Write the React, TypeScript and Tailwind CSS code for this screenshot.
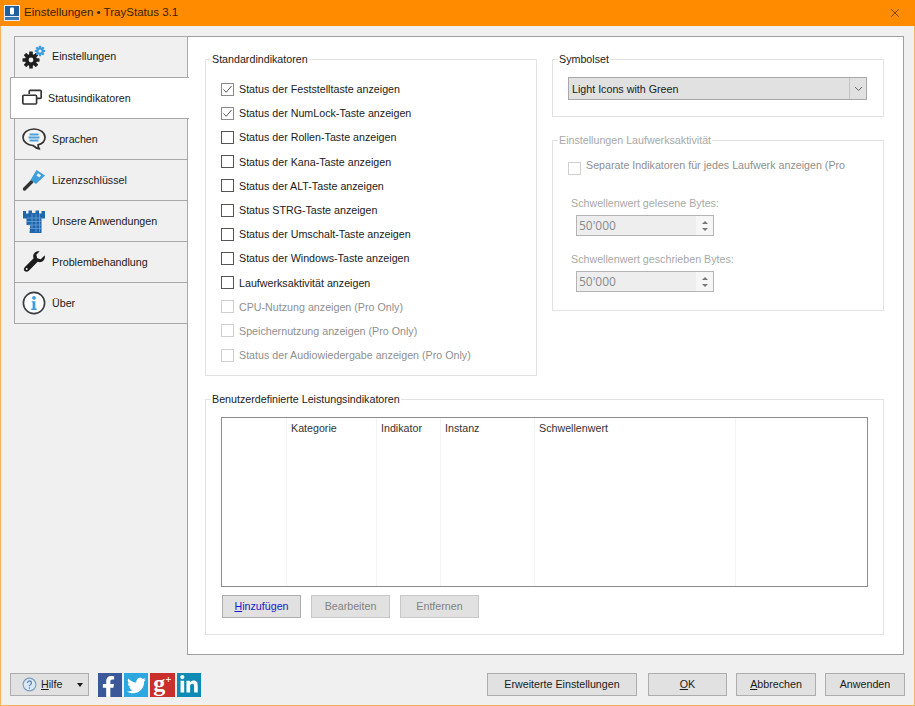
import type { ReactNode } from "react"
import { FaFacebookF, FaLinkedinIn, FaTwitter } from "react-icons/fa"
import { X } from "lucide-react"

const GearsIcon = () => (
  <svg width="24" height="24" viewBox="0 0 24 24">
    <g fill="#1f1f1f">
      <circle cx="9" cy="15" r="6" />
      {[0, 45, 90, 135].map((a) => (
        <rect key={a} x="7.2" y="6.5" width="3.6" height="17" rx="0.6" transform={`rotate(${a} 9 15)`} />
      ))}
    </g>
    <circle cx="9" cy="15" r="2.4" fill="#f0f0f0" />
    <g fill="#3f9ddb">
      <circle cx="18" cy="6" r="3.8" />
      {[0, 45, 90, 135].map((a) => (
        <rect key={a} x="16.9" y="0.8" width="2.2" height="10.4" rx="0.4" transform={`rotate(${a} 18 6)`} />
      ))}
    </g>
    <circle cx="18" cy="6" r="1.6" fill="#f0f0f0" />
  </svg>
)

const WindowsIcon = () => (
  <svg width="22" height="22" viewBox="0 0 24 24" fill="none" stroke="#333" strokeWidth="1.8" strokeLinejoin="round">
    <path d="M9 7.5V4.6a1 1 0 0 1 1-1h11a1 1 0 0 1 1 1v6.8a1 1 0 0 1-1 1h-3.5" />
    <rect x="2" y="9" width="15" height="9.5" rx="1" />
  </svg>
)

const ChatIcon = () => (
  <svg width="24" height="24" viewBox="0 0 24 24">
    <path
      d="M12 2C5.9 2 1 5.600 1 10.300c0 4.400 4.300 7.900 10 8.200 1.800 1.600 4 3 6.500 3.500-1-1.200-1.500-2.600-1.500-4.200 4.200-1 7-4 7-7.500C23 5.600 18.100 2 12 2Z"
      fill="#f4f4f4"
      stroke="#333"
      strokeWidth="1.7"
      strokeLinejoin="round"
    />
    <path d="M7.500 7.500h9M6.500 10.500h11M7.500 13.500h9" stroke="#4a9fdc" strokeWidth="1.800" />
  </svg>
)

const KeyIcon = () => (
  <svg width="24" height="24" viewBox="0 0 24 24">
    <path d="M2.500 21 10 13.500" stroke="#333" strokeWidth="3.400" strokeLinecap="round" />
    <path d="M8.500 12 14.500 2 23 7.500 14 16Z" fill="#3f9ddb" strokeLinejoin="round" />
    <rect x="15" y="6" width="3.600" height="2.800" fill="#e6f3fb" transform="rotate(35 16.800 7.400)" />
  </svg>
)

const CastleIcon = () => (
  <svg width="24" height="26" viewBox="0 0 24 26">
    <path
      d="M1 3h3v2.500h2.500V2.500H10V5h3.500V2.500H17v3h2.500V3H23v7.500h-3.500V25H7.500l.8-8H4.500V10.500H1Z"
      fill="#1f66ad"
    />
    <path d="M5 10h15M5 13.500h15M6 17h14M7 20.500h13M10 6v14M14 6v18M17.500 6v18" stroke="#6ea6da" strokeWidth="0.700" />
  </svg>
)

const WrenchIcon = () => (
  <svg width="24" height="24" viewBox="0 0 24 24">
    <path
      d="M22.800 5.700c.6 3.100-1.600 6.300-5 6.500-.9 0-1.500-.1-2.100-.4L6.800 20.700c-1.200 1.300-3 1.500-4.200.4-1.100-1.100-1-2.900.3-4.200l8.700-8.700c-.4-.8-.5-1.600-.4-2.500C11.500 2.800 14.600.7 17.700 1.300l-3.400 3.400.9 3.600 3.600.9 3.400-3.500Z"
      fill="#1c1c1c"
    />
    <circle cx="4.700" cy="19" r="1" fill="#f0f0f0" />
  </svg>
)

const InfoIcon = () => (
  <svg width="24" height="24" viewBox="0 0 26 26">
    <circle cx="13" cy="13" r="11.500" fill="#fff" stroke="#3a3f44" strokeWidth="1.800" />
    <circle cx="13" cy="7.500" r="2" fill="#3f9ddb" />
    <path d="M10.500 11h4v8h1.500v1.500h-6V19h1.500v-6.500h-1Z" fill="#3f9ddb" />
  </svg>
)

const HelpIcon = () => (
  <svg width="15" height="15" viewBox="0 0 16 16">
    <circle cx="8" cy="8" r="6.800" fill="#dbe8f4" stroke="#7c9cc0" strokeWidth="1.200" />
    <path d="M5.900 6.300a2.100 2.100 0 1 1 3.300 1.700c-.8.500-1.200.9-1.200 1.800" fill="none" stroke="#5b83b3" strokeWidth="1.300" />
    <circle cx="8" cy="11.800" r="0.800" fill="#5b83b3" />
  </svg>
)

const tabs = [
  { label: "Einstellungen", icon: <GearsIcon /> },
  { label: "Statusindikatoren", icon: <WindowsIcon />, active: true },
  { label: "Sprachen", icon: <ChatIcon /> },
  { label: "Lizenzschlüssel", icon: <KeyIcon /> },
  { label: "Unsere Anwendungen", icon: <CastleIcon /> },
  { label: "Problembehandlung", icon: <WrenchIcon /> },
  { label: "Über", icon: <InfoIcon /> },
]

const indicators = [
  { label: "Status der Feststelltaste anzeigen", checked: true },
  { label: "Status der NumLock-Taste anzeigen", checked: true },
  { label: "Status der Rollen-Taste anzeigen" },
  { label: "Status der Kana-Taste anzeigen" },
  { label: "Status der ALT-Taste anzeigen" },
  { label: "Status STRG-Taste anzeigen" },
  { label: "Status der Umschalt-Taste anzeigen" },
  { label: "Status der Windows-Taste anzeigen" },
  { label: "Laufwerksaktivität anzeigen" },
  { label: "CPU-Nutzung anzeigen (Pro Only)", disabled: true },
  { label: "Speichernutzung anzeigen (Pro Only)", disabled: true },
  { label: "Status der Audiowiedergabe anzeigen (Pro Only)", disabled: true },
]

const columns = [
  { label: "", width: "w-[65px]" },
  { label: "Kategorie", width: "w-[90px]" },
  { label: "Indikator", width: "w-[64px]" },
  { label: "Instanz", width: "w-[94px]" },
  { label: "Schwellenwert", width: "w-[201px]" },
  { label: "", width: "flex-1" },
]

function Checkbox({ checked, disabled }: { checked?: boolean; disabled?: boolean }) {
  return (
    <span
      className={`flex h-[13px] w-[13px] shrink-0 items-center justify-center border bg-white ${
        disabled ? "border-[#d0d0d0]" : checked ? "border-[#8a8a8a]" : "border-[#555555]"
      }`}
    >
      {checked && (
        <svg width="11" height="11" viewBox="0 0 11 11" fill="none" stroke="#555" strokeWidth="1">
          <path d="M1.500 5.500 4.200 8.300 9.500 2" />
        </svg>
      )}
    </span>
  )
}

function GroupBox({ title, disabled, className, children }: { title: string; disabled?: boolean; className: string; children: ReactNode }) {
  return (
    <fieldset className={`min-w-0 shrink-0 border border-[#e3e3e3] bg-white ${className}`}>
      <legend className={`ml-[5px] h-[14px] px-px leading-[14px] ${disabled ? "text-[#a8a8a8]" : "text-[#1a1a1a]"}`}>
        {title}
      </legend>
      {children}
    </fieldset>
  )
}

function Spinner() {
  return (
    <div className="ml-[5px] flex h-[21px] w-[138px] items-center justify-between border border-[#b4b4b4] bg-[#eeeeee] pl-[2px]">
      <span className="font-['Open_Sans',sans-serif] text-[12px] text-[#8a8a8a]">50'000</span>
      <div className="flex h-full w-[17px] flex-col items-center justify-center gap-[4px] bg-[#f6f6f6]">
        <span className="h-0 w-0 border-x-[3px] border-b-[3px] border-x-transparent border-b-[#777777]" />
        <span className="h-0 w-0 border-x-[3px] border-t-[3px] border-x-transparent border-t-[#777777]" />
      </div>
    </div>
  )
}

function Button({ children, className = "" }: { children: ReactNode; className?: string }) {
  return (
    <button className={`flex h-[23px] w-[79px] items-center justify-center border border-[#adadad] bg-[#e1e1e1] text-[#1a1a1a] ${className}`}>
      {children}
    </button>
  )
}

export default function App() {
  return (
    <div className="flex h-[706px] w-[915px] flex-col border-x border-b border-[#f7b35c] bg-[#f0f0f0] font-['Liberation_Sans',Arial,sans-serif] text-[10.7px] text-[#1a1a1a]">
      <div className="-mx-px flex h-[26px] shrink-0 items-center bg-[#ff8c00] pl-[4px] pr-[13px]">
        <svg width="16" height="16" viewBox="0 0 16 16">
          <rect width="16" height="16" fill="#e8eef4" />
          <rect x="1" y="1" width="14" height="10" fill="#1f5f9e" />
          <rect x="6" y="2.500" width="4" height="7" rx="1" fill="#fff" />
          <rect x="1" y="12" width="14" height="3" fill="#3f78b0" />
        </svg>
        <span className="ml-[4px] flex-1 text-[11.55px] text-[#3a2000]">Einstellungen • TrayStatus 3.1</span>
        <X size={14} strokeWidth={1.2} color="#4a2a00" />
      </div>

      <div className="flex flex-1 flex-col pt-[10px]">
        <div className="flex h-[619px] pl-[13px] pr-[10px]">
          <nav className="relative z-10 flex w-[173px] shrink-0 flex-col">
            {tabs.map((tab) => (
              <div
                key={tab.label}
                className={
                  tab.active
                    ? "-ml-[4px] -mt-px flex h-[42px] w-[179px] shrink-0 items-center border-y border-l border-[#a8a8a8] bg-white pl-[10px]"
                    : "flex h-[42px] w-[174px] shrink-0 items-center border border-[#a8a8a8] bg-[#f0f0f0] pl-[7px] first:pb-px [&:not(:first-child)]:-mt-px"
                }
              >
                <span className={`flex shrink-0 items-center justify-start ${tab.active ? "w-[27px]" : "w-[30px]"}`}>{tab.icon}</span>
                <span>{tab.label}</span>
              </div>
            ))}
          </nav>

          <main className="flex min-w-0 flex-1 flex-col gap-[16px] border border-[#a0a0a0] bg-white pl-[17px] pr-[19px] pt-[15px]">
            <div className="flex gap-[15px]">
              <GroupBox title="Standardindikatoren" className="h-[324px] w-[332px]">
                <div className="flex flex-col pl-[15px] pt-[11px]">
                  {indicators.map((item) => (
                    <label key={item.label} className={`flex h-[24.2px] items-center gap-[5px] ${item.disabled ? "text-[#8f8f8f]" : ""}`}>
                      <Checkbox checked={item.checked} disabled={item.disabled} />
                      {item.label}
                    </label>
                  ))}
                </div>
              </GroupBox>

              <div className="flex w-[332px] shrink-0 flex-col gap-[16px]">
                <GroupBox title="Symbolset" className="h-[65px]">
                  <div className="ml-[15px] mt-[11px] flex h-[23px] w-[299px] items-center border border-[#a8a8a8] bg-[#e1e1e1] pl-[3px]">
                    <span className="flex-1 pt-px">Light Icons with Green</span>
                    <span className="flex h-full w-[17px] items-center justify-center border-l border-[#c4c4c4]">
                      <svg width="9" height="6" viewBox="0 0 9 6" fill="none" stroke="#666" strokeWidth="1">
                        <path d="M1 1 4.500 4.500 8 1" />
                      </svg>
                    </span>
                  </div>
                </GroupBox>

                <GroupBox title="Einstellungen Laufwerksaktivität" disabled className="h-[178px]">
                  <div className="flex flex-col pl-[15px] text-[#8f8f8f]">
                    <div className="mt-[11px] flex items-start gap-[5px] overflow-hidden whitespace-nowrap pr-[36px]">
                      <span className="mt-[4px]">
                        <Checkbox disabled />
                      </span>
                      <span className="leading-[14px]">Separate Indikatoren für jedes Laufwerk anzeigen (Pro</span>
                    </div>
                    <span className="ml-[3px] mt-[21px] leading-[14px] text-[#a8a8a8]">Schwellenwert gelesene Bytes:</span>
                    <div className="mt-[5px] ml-[3px]">
                      <Spinner />
                    </div>
                    <span className="ml-[3px] mt-[16px] leading-[14px] text-[#a8a8a8]">Schwellenwert geschrieben Bytes:</span>
                    <div className="mt-[5px] ml-[3px]">
                      <Spinner />
                    </div>
                  </div>
                </GroupBox>
              </div>
            </div>

            <GroupBox title="Benutzerdefinierte Leistungsindikatoren" className="h-[243px] w-[679px]">
              <div className="ml-[15px] mt-[11px] flex h-[170px] w-[647px] border border-[#8c8c8c]">
                {columns.map((col, i) => (
                  <div key={i} className={`${col.width} border-r border-[#f3f3f3] pl-[4px] pt-[2px] text-[#333333] last:border-r-0`}>
                    {col.label}
                  </div>
                ))}
              </div>
              <div className="ml-[16px] mt-[8px] flex gap-[10px]">
                <Button className="text-[#1a1acc]">
                  <span>
                    <span className="underline">H</span>inzufügen
                  </span>
                </Button>
                <Button className="border-[#c8c8c8] bg-[#cccccc] text-[#838383]">Bearbeiten</Button>
                <Button className="border-[#c8c8c8] bg-[#cccccc] text-[#838383]">Entfernen</Button>
              </div>
            </GroupBox>
          </main>
        </div>

        <footer className="flex h-[49px] items-start pl-[9px] pr-[9px] pt-[18px]">
          <button className="flex h-[23px] w-[79px] items-center border border-[#adadad] bg-[#e1e1e1] pl-[11px]">
            <HelpIcon />
            <span className="ml-[4px] flex-1 text-left">
              <span className="underline">H</span>ilfe
            </span>
            <span className="mr-[5px] h-0 w-0 border-x-[3px] border-t-[4px] border-x-transparent border-t-[#1a1a1a]" />
          </button>

          <div className="ml-[9px] flex gap-[2px]">
            <span className="flex h-[24px] w-[24px] items-end justify-end bg-[#3b5998] pr-[3px] text-white">
              <FaFacebookF size={21} />
            </span>
            <span className="flex h-[24px] w-[24px] items-center justify-center bg-[#2ca7e0] text-white">
              <FaTwitter size={19} />
            </span>
            <span className="flex h-[24px] w-[25px] items-start justify-center bg-[#c9302c] font-['Liberation_Serif',serif] font-bold text-white">
              <span className="text-[24px] leading-[20px]">g</span>
              <span className="mt-[1px] text-[11px] leading-[11px]">+</span>
            </span>
            <span className="flex h-[24px] w-[24px] items-center justify-center bg-[#0e8ab5] text-white">
              <FaLinkedinIn size={20} />
            </span>
          </div>

          <div className="ml-auto flex gap-[9px]">
            <Button className="mr-[2px] w-[150px]">Erweiterte Einstellungen</Button>
            <Button>
              <span>
                <span className="underline">O</span>K
              </span>
            </Button>
            <Button className="w-[80px]">
              <span>
                <span className="underline">A</span>bbrechen
              </span>
            </Button>
            <Button className="w-[80px]">Anwenden</Button>
          </div>
        </footer>
      </div>
    </div>
  )
}
